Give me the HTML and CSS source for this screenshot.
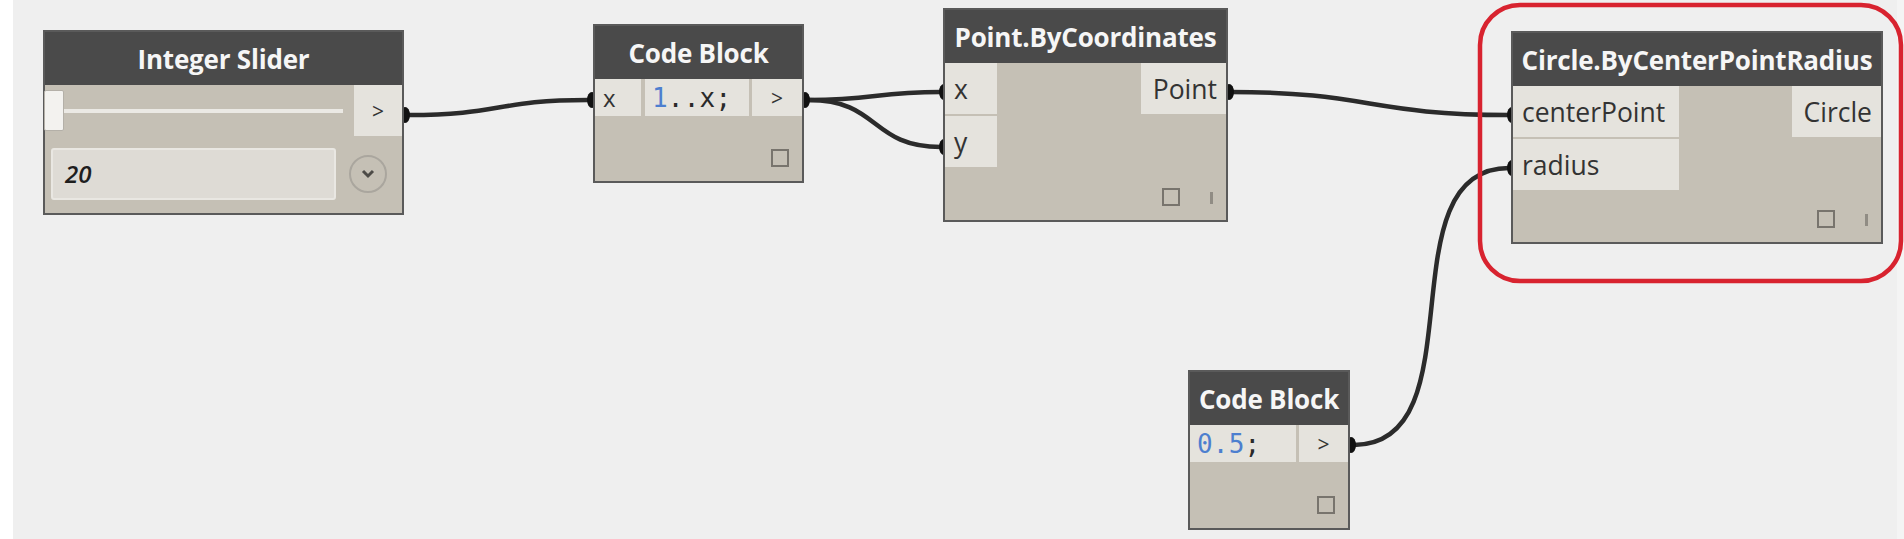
FILE: index.html
```html
<!DOCTYPE html>
<html>
<head>
<meta charset="utf-8">
<title>Dynamo graph</title>
<link rel="stylesheet" href="styles.css">
</head>
<body>
<div class="page">
  <div class="strip-left"></div>
  <div class="canvas"></div>
  <div class="strip-right"></div>

  <svg class="wires" width="1904" height="539" viewBox="0 0 1904 539">
    <g class="wire">
      <path d="M409,115 C500,115 497,100 588,100"/>
      <path d="M809,100 C875,100 875,92 941,92"/>
      <path d="M809,100 C880,100 870,147 941,147"/>
      <path d="M1230,92 C1370,92 1369,115 1509,115"/>
      <path d="M1354,445 C1480,445 1383,168 1509,168"/>
    </g>
    <g class="dots">
      <ellipse cx="405" cy="115" rx="5" ry="8"/>
      <ellipse cx="592" cy="100" rx="5" ry="8"/>
      <ellipse cx="805" cy="100" rx="5" ry="8"/>
      <ellipse cx="944" cy="92" rx="5" ry="8"/>
      <ellipse cx="944" cy="147" rx="5" ry="8"/>
      <ellipse cx="1229" cy="92" rx="5" ry="8"/>
      <ellipse cx="1512" cy="115" rx="5" ry="8"/>
      <ellipse cx="1512" cy="168" rx="5" ry="8"/>
      <ellipse cx="1351" cy="445" rx="5" ry="8"/>
    </g>
    <rect class="highlight" x="1480" y="5" width="421" height="276" rx="40" ry="40"/>
  </svg>

  <!-- Integer Slider -->
  <div class="node n-slider">
    <div class="node-header">Integer Slider</div>
    <div class="node-body">
      <div class="slider-row">
        <div class="slider">
          <div class="thumb"></div>
          <div class="track"></div>
        </div>
        <div class="out-cell">&gt;</div>
      </div>
      <div class="value-row">
        <div class="value-box">20</div>
        <div class="expander">
          <svg width="14" height="10" viewBox="0 0 14 10"><path d="M2 2 L7 7 L12 2" fill="none" stroke="#4d4b47" stroke-width="3"/></svg>
        </div>
      </div>
    </div>
  </div>

  <!-- Code Block 1 -->
  <div class="node n-cb1">
    <div class="node-header">Code Block</div>
    <div class="node-body">
      <div class="code-row">
        <div class="cell in-x">x</div>
        <div class="cell code code1"><span class="num">1</span>..x;</div>
        <div class="cell out">&gt;</div>
      </div>
      <div class="footer"><span class="sq"></span></div>
    </div>
  </div>

  <!-- Point.ByCoordinates -->
  <div class="node n-point">
    <div class="node-header">Point.ByCoordinates</div>
    <div class="node-body">
      <div class="ports">
        <div class="inputs in-point">
          <div class="port">x</div>
          <div class="port">y</div>
        </div>
        <div class="outputs">
          <div class="port out-port">Point</div>
        </div>
      </div>
      <div class="footer"><span class="sq"></span><span class="bar"></span></div>
    </div>
  </div>

  <!-- Circle.ByCenterPointRadius -->
  <div class="node n-circle">
    <div class="node-header">Circle.ByCenterPointRadius</div>
    <div class="node-body">
      <div class="ports">
        <div class="inputs in-circle">
          <div class="port">centerPoint</div>
          <div class="port">radius</div>
        </div>
        <div class="outputs">
          <div class="port out-port">Circle</div>
        </div>
      </div>
      <div class="footer"><span class="sq"></span><span class="bar"></span></div>
    </div>
  </div>

  <!-- Code Block 2 -->
  <div class="node n-cb2">
    <div class="node-header">Code Block</div>
    <div class="node-body">
      <div class="code-row">
        <div class="cell code code2"><span class="num">0.5</span>;</div>
        <div class="cell out">&gt;</div>
      </div>
      <div class="footer"><span class="sq"></span></div>
    </div>
  </div>
</div>
</body>
</html>
```

FILE: styles.css
```css
* { box-sizing: border-box; }

html, body {
  margin: 0;
  padding: 0;
  background: #efefef;
  overflow: hidden;
}

.page {
  position: relative;
  width: 1904px;
  height: 539px;
  display: flex;
  font-family: "Open Sans", "Noto Sans", sans-serif;
}

.strip-left { width: 13px; background: #ffffff; }
.canvas { flex: 1; background: #efefef; }
.strip-right { width: 7px; background: #f4f4f4; }

.wires {
  position: absolute;
  left: 0;
  top: 0;
}
.wire path {
  fill: none;
  stroke: #2b2b2b;
  stroke-width: 4.5;
  stroke-linecap: round;
}
.dots ellipse { fill: #111; }
.highlight {
  fill: none;
  stroke: #d8232f;
  stroke-width: 4.5;
}

/* ---------- nodes ---------- */
.node {
  position: absolute;
  display: flex;
  flex-direction: column;
  border: 2px solid #5a5a5a;
  background: #c5c0b5;
}
.node-header {
  height: 53px;
  flex: none;
  background: #4a4a4a;
  color: #f6f6f6;
  font-weight: 700;
  font-size: 26px;
  display: flex;
  align-items: center;
  justify-content: center;
  white-space: nowrap;
  letter-spacing: -0.2px;
}
.node-body {
  flex: 1;
  display: flex;
  flex-direction: column;
}

.n-slider { left: 43px; top: 30px; width: 361px; height: 185px; }
.n-cb1    { left: 593px; top: 24px; width: 211px; height: 159px; }
.n-point  { left: 943px; top: 8px;  width: 285px; height: 214px; }
.n-circle { left: 1511px; top: 31px; width: 372px; height: 213px; }
.n-cb2    { left: 1188px; top: 370px; width: 162px; height: 160px; }

/* ---------- slider ---------- */
.slider-row {
  height: 51px;
  display: flex;
}
.slider {
  flex: 1;
  display: flex;
  align-items: center;
  padding-right: 11px;
}
.thumb {
  width: 20px;
  height: 41px;
  margin-left: -1px;
  background: #f3f2ef;
  border: 1px solid #b4b0a8;
  border-radius: 2px;
}
.track {
  flex: 1;
  height: 4px;
  background: #ebe9e4;
}
.out-cell {
  width: 48px;
  background: #e5e3dd;
  color: #333;
  font-size: 21px;
  display: flex;
  align-items: center;
  justify-content: center;
}
.value-row {
  flex: 1;
  display: flex;
  align-items: center;
  padding-left: 6px;
  gap: 13px;
  padding-bottom: 2px;
}
.value-box {
  width: 285px;
  height: 52px;
  background: #dedbd5;
  border: 2px solid #e9e7e2;
  border-radius: 3px;
  font-style: italic;
  font-size: 24px;
  font-weight: 600;
  color: #1e1e1e;
  display: flex;
  align-items: center;
  padding-left: 12px;
}
.expander {
  width: 38px;
  height: 38px;
  border: 2px solid #aaa69e;
  border-radius: 50%;
  display: flex;
  align-items: center;
  justify-content: center;
}

/* ---------- code blocks ---------- */
.code-row {
  height: 37px;
  display: flex;
  flex: none;
}
.cell {
  background: #e5e3dd;
  color: #333;
  display: flex;
  align-items: center;
}
.in-x {
  width: 46px;
  padding-left: 8px;
  font-size: 24px;
  margin-right: 4px;
}
.code {
  font-family: "DejaVu Sans Mono", "Liberation Mono", monospace;
  font-size: 26px;
  color: #2a2a2a;
  margin-right: 3px;
  letter-spacing: 0.2px;
}
.code1 { width: 104px; padding-left: 7px; }
.code2 { width: 106px; padding-left: 7px; }
.num { color: #4d7fcf; }
.out {
  flex: 1;
  justify-content: center;
  font-size: 21px;
}

/* ---------- ports ---------- */
.ports {
  display: flex;
  justify-content: space-between;
  flex: none;
}
.inputs {
  display: flex;
  flex-direction: column;
  gap: 2px;
}
.in-point { width: 52px; }
.in-circle { width: 166px; }
.port {
  height: 51px;
  background: #e5e3dd;
  color: #333;
  font-size: 26.5px;
  display: flex;
  align-items: center;
  padding-left: 9px;
  white-space: nowrap;
}
.out-port {
  justify-content: flex-end;
  padding-left: 12px;
  padding-right: 9px;
}

/* ---------- footer icons ---------- */
.footer {
  flex: 1;
  display: flex;
  justify-content: flex-end;
  align-items: flex-end;
  gap: 30px;
  padding: 0 13px 14px 0;
}
.sq {
  width: 18px;
  height: 18px;
  border: 2px solid #78746d;
}
.bar {
  width: 3px;
  height: 12px;
  background: #908c84;
  margin-bottom: 2px;
}
```
